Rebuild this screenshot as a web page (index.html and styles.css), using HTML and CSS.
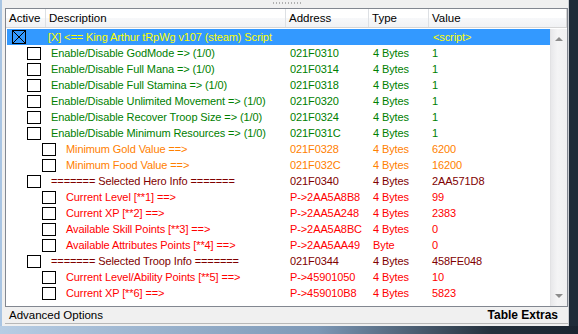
FILE: index.html
```html
<!DOCTYPE html>
<html>
<head>
<meta charset="utf-8">
<link rel="stylesheet" href="styles.css">
</head>
<body>
<div class="window">
  <div class="inner">
    <div class="top-strip"><span class="grip"></span></div>
    <div class="list">
      <div class="header">
        <div class="hcell">Active</div>
        <div class="hcell">Description</div>
        <div class="hcell">Address</div>
        <div class="hcell">Type</div>
        <div class="hcell last">Value</div>
      </div>
      <div class="body">
        <div class="rows">
          <div class="row selected">
            <div class="desc lv0"><span class="box checked"><svg width="14" height="14" viewBox="0 0 14 14"><rect x="0.5" y="0.5" width="13" height="13" fill="none" stroke="#000"/><path d="M1 1L13 13M13 1L1 13" stroke="#000" stroke-width="1"/></svg></span><span class="txt">[X] &lt;== King Arthur tRpWg v107 (steam) Script</span></div>
            <div class="cell"></div><div class="cell"></div><div class="cell val">&lt;script&gt;</div>
          </div>
          <div class="row green">
            <div class="desc lv1"><span class="box"></span><span class="txt">Enable/Disable GodMode =&gt; (1/0)</span></div>
            <div class="cell">021F0310</div><div class="cell">4 Bytes</div><div class="cell val">1</div>
          </div>
          <div class="row green">
            <div class="desc lv1"><span class="box"></span><span class="txt">Enable/Disable Full Mana =&gt; (1/0)</span></div>
            <div class="cell">021F0314</div><div class="cell">4 Bytes</div><div class="cell val">1</div>
          </div>
          <div class="row green">
            <div class="desc lv1"><span class="box"></span><span class="txt">Enable/Disable Full Stamina =&gt; (1/0)</span></div>
            <div class="cell">021F0318</div><div class="cell">4 Bytes</div><div class="cell val">1</div>
          </div>
          <div class="row green">
            <div class="desc lv1"><span class="box"></span><span class="txt">Enable/Disable Unlimited Movement =&gt; (1/0)</span></div>
            <div class="cell">021F0320</div><div class="cell">4 Bytes</div><div class="cell val">1</div>
          </div>
          <div class="row green">
            <div class="desc lv1"><span class="box"></span><span class="txt">Enable/Disable Recover Troop Size =&gt; (1/0)</span></div>
            <div class="cell">021F0324</div><div class="cell">4 Bytes</div><div class="cell val">1</div>
          </div>
          <div class="row green">
            <div class="desc lv1"><span class="box"></span><span class="txt">Enable/Disable Minimum Resources =&gt; (1/0)</span></div>
            <div class="cell">021F031C</div><div class="cell">4 Bytes</div><div class="cell val">1</div>
          </div>
          <div class="row orange">
            <div class="desc lv2"><span class="box"></span><span class="txt">Minimum Gold Value ==&gt;</span></div>
            <div class="cell">021F0328</div><div class="cell">4 Bytes</div><div class="cell val">6200</div>
          </div>
          <div class="row orange">
            <div class="desc lv2"><span class="box"></span><span class="txt">Minimum Food Value ==&gt;</span></div>
            <div class="cell">021F032C</div><div class="cell">4 Bytes</div><div class="cell val">16200</div>
          </div>
          <div class="row maroon">
            <div class="desc lv1"><span class="box"></span><span class="txt">======= Selected Hero Info =======</span></div>
            <div class="cell">021F0340</div><div class="cell">4 Bytes</div><div class="cell val">2AA571D8</div>
          </div>
          <div class="row red">
            <div class="desc lv2"><span class="box"></span><span class="txt">Current Level [**1] ==&gt;</span></div>
            <div class="cell">P-&gt;2AA5A8B8</div><div class="cell">4 Bytes</div><div class="cell val">99</div>
          </div>
          <div class="row red">
            <div class="desc lv2"><span class="box"></span><span class="txt">Current XP [**2] ==&gt;</span></div>
            <div class="cell">P-&gt;2AA5A248</div><div class="cell">4 Bytes</div><div class="cell val">2383</div>
          </div>
          <div class="row red">
            <div class="desc lv2"><span class="box"></span><span class="txt">Available Skill Points [**3] ==&gt;</span></div>
            <div class="cell">P-&gt;2AA5A8BC</div><div class="cell">4 Bytes</div><div class="cell val">0</div>
          </div>
          <div class="row red">
            <div class="desc lv2"><span class="box"></span><span class="txt">Available Attributes Points [**4] ==&gt;</span></div>
            <div class="cell">P-&gt;2AA5AA49</div><div class="cell">Byte</div><div class="cell val">0</div>
          </div>
          <div class="row maroon">
            <div class="desc lv1"><span class="box"></span><span class="txt">======= Selected Troop Info =======</span></div>
            <div class="cell">021F0344</div><div class="cell">4 Bytes</div><div class="cell val">458FE048</div>
          </div>
          <div class="row red">
            <div class="desc lv2"><span class="box"></span><span class="txt">Current Level/Ability Points [**5] ==&gt;</span></div>
            <div class="cell">P-&gt;45901050</div><div class="cell">4 Bytes</div><div class="cell val">10</div>
          </div>
          <div class="row red">
            <div class="desc lv2"><span class="box"></span><span class="txt">Current XP [**6] ==&gt;</span></div>
            <div class="cell">P-&gt;459010B8</div><div class="cell">4 Bytes</div><div class="cell val">5823</div>
          </div>
        </div>
        <div class="scrollbar">
          <span class="arrow up"></span>
          <span class="arrow down"></span>
        </div>
      </div>
    </div>
    <div class="bottom-bar">
      <span class="adv">Advanced Options</span>
      <span class="extras">Table Extras</span>
    </div>
  </div>
  <div class="bottom-frame"></div>
</div>
</body>
</html>
```
FILE: styles.css
```css
html, body {
  margin: 0;
  padding: 0;
}
body {
  width: 578px;
  height: 334px;
  overflow: hidden;
  background: #1f2b38;
  font-family: "Liberation Sans", Arial, sans-serif;
  font-size: 11px;
}
.window {
  width: 578px;
  height: 334px;
  display: flex;
  flex-direction: column;
  box-sizing: border-box;
}
.inner {
  flex: 1;
  margin-left: 2px;
  margin-right: 9px;
  background: #f0f0f0;
  border-right: 1px solid #c9ccd1;
  display: flex;
  flex-direction: column;
  box-shadow: -2px 0 0 #a9c5e3;
}
.top-strip {
  height: 8px;
  position: relative;
}
.grip {
  position: absolute;
  left: 271px;
  top: 2px;
  width: 28px;
  height: 2px;
  background: repeating-linear-gradient(90deg, #b0b0b0 0 1px, transparent 1px 3px);
}
.list {
  margin-left: 3px;
  width: 563px;
  height: 299px;
  box-sizing: border-box;
  border: 1px solid #828790;
  background: #fff;
  display: flex;
  flex-direction: column;
}
.header {
  display: grid;
  grid-template-columns: 40px 240px 83px 60px 1fr;
  height: 19px;
  box-sizing: border-box;
  border-bottom: 1px solid #d5d5d5;
  background: linear-gradient(#ffffff, #ffffff 50%, #f7f8fa 51%, #f1f2f4);
  font-size: 11.5px;
  color: #000;
}
.hcell {
  line-height: 18px;
  padding-left: 3px;
  border-right: 1px solid #dde0e4;
  white-space: nowrap;
  overflow: hidden;
}
.hcell.last {
  border-right: 1px solid #d5d5d5;
}
.body {
  flex: 1;
  display: flex;
  padding-top: 1px;
  overflow: hidden;
}
.rows {
  width: 544px;
  display: flex;
  flex-direction: column;
}
.row {
  display: grid;
  grid-template-columns: 280px 83px 60px 1fr;
  height: 16px;
  line-height: 16px;
  white-space: nowrap;
  letter-spacing: -0.1px;
}
.row.selected {
  background: #3399ff;
  color: #ffff00;
  margin-left: 1px;
}
.row.selected .desc {
  margin-left: -1px;
}
.green { color: #008000; }
.orange { color: #ff8000; }
.maroon { color: #800000; }
.red { color: #ff0000; }
.desc {
  display: flex;
  align-items: flex-start;
}
.box {
  width: 14px;
  height: 13px;
  box-sizing: border-box;
  border: 1px solid #000;
  background: #fff;
  margin-top: 2px;
  flex: none;
}
.box.checked {
  border: 0;
  background: transparent;
  width: 14px;
  height: 14px;
  margin-top: 1px;
}
.box.checked svg { display: block; }
.lv0 { padding-left: 6px; }
.lv0 .txt { margin-left: 22px; }
.lv1 { padding-left: 21px; }
.lv1 .txt { margin-left: 10px; }
.lv2 { padding-left: 36px; }
.lv2 .txt { margin-left: 10px; }
.cell {
  padding-left: 4px;
  overflow: hidden;
}
.cell.val { padding-left: 3px; }
.scrollbar {
  flex: 1;
  background: linear-gradient(90deg, #e8e8ea, #f4f4f5 40%, #f0f0f1);
  border-left: 1px solid #e2e2e4;
  display: flex;
  flex-direction: column;
  justify-content: space-between;
  align-items: center;
  padding: 8px 0 8px;
}
.arrow {
  width: 0;
  height: 0;
  border-left: 4px solid transparent;
  border-right: 4px solid transparent;
}
.arrow.up { border-bottom: 4px solid #8c8c8c; }
.arrow.down { border-top: 4px solid #8c8c8c; }
.bottom-bar {
  margin-left: 3px;
  width: 563px;
  height: 17px;
  box-sizing: border-box;
  border-bottom: 1px solid #b8b8b8;
  display: flex;
  justify-content: space-between;
  align-items: center;
  font-size: 11.5px;
  padding: 0 10px 0 4px;
}
.extras {
  font-weight: bold;
  font-size: 12px;
}
.bottom-frame {
  height: 8px;
  background: linear-gradient(90deg, #b7cde4, #7d98b6 55%, #24303c 85%, #1a2430);
}
```
